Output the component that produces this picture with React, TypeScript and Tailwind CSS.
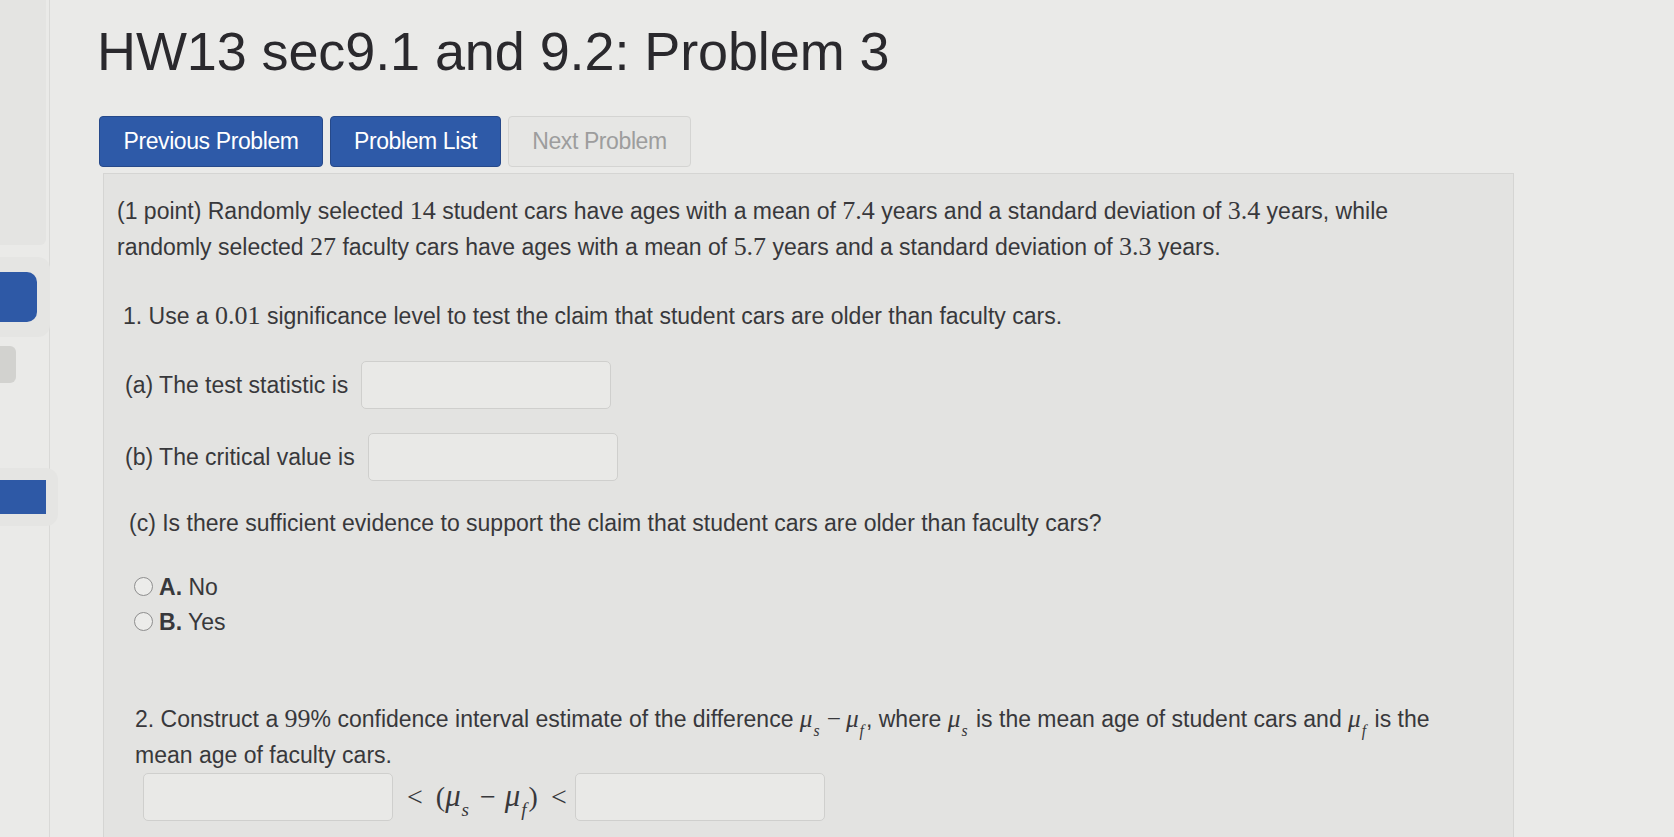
import React from 'react';

const Num = ({ children }: { children: React.ReactNode }) => (
  <span className="font-['Liberation_Serif',serif] text-[1.13em] leading-none">{children}</span>
);

const Mu = ({ sub }: { sub: string }) => (
  <span className="font-['Liberation_Serif',serif] italic text-[1.1em] leading-none">
    μ<sub className="ml-[1px] mr-[2px] text-[0.62em] align-[-0.3em]">{sub}</sub>
  </span>
);

const AnswerBox = ({ className = '' }: { className?: string }) => (
  <input
    type="text"
    className={`h-[48px] w-[250px] rounded-[5px] border border-[#cfcfcd] bg-[#e9e9e7] outline-none ${className}`}
  />
);

const Radio = ({ letter, label }: { letter: string; label: string }) => (
  <label className="flex h-[35px] items-center gap-[6px]">
    <span className="h-[19px] w-[19px] rounded-full border-[1.5px] border-[#8e8e8e] bg-[#ececea]" />
    <span>
      <b className="font-semibold">{letter}.</b> {label}
    </span>
  </label>
);

const Sidebar = () => (
  <aside className="flex w-[50px] shrink-0 flex-col border-r border-[#d9d9d7]">
    <div className="h-[245px] w-[46px] rounded-br-md bg-[#e4e4e2]" />
    <div className="mt-[12px] w-[50px] rounded-r-xl bg-[#e5e5e3] py-[15px]">
      <div className="h-[50px] w-[37px] rounded-r-[10px] bg-[#2e59a6]" />
    </div>
    <div className="mt-[9px] h-[37px] w-[16px] rounded-r-md bg-[#d2d2cf]" />
    <div className="mt-[85px] w-[58px] rounded-r-xl bg-[#e5e5e3] py-[12px]">
      <div className="h-[34px] w-[46px] bg-[#2e59a6]" />
    </div>
  </aside>
);

export default function App() {
  return (
    <div className="flex min-h-screen bg-[#eaeae8] font-['Liberation_Sans',Arial,sans-serif] text-[#38383b]">
      <Sidebar />
      <main className="flex-1 pl-[47px]">
        <h1 className="mt-[24px] text-[54px] leading-none tracking-[-0.1px] text-[#2a292d]">
          HW13 sec9.1 and 9.2: Problem 3
        </h1>

        <div className="mt-[38px] flex gap-[7px] pl-[2px]">
          <button className="h-[51px] w-[224px] rounded-[4px] border border-[#26498a] bg-[#2e5aa8] text-[23px] tracking-[-0.4px] text-white">
            Previous Problem
          </button>
          <button className="h-[51px] w-[171px] rounded-[4px] border border-[#26498a] bg-[#2e5aa8] text-[23px] tracking-[-0.4px] text-white">
            Problem List
          </button>
          <button className="h-[51px] w-[183px] rounded-[4px] border border-[#d4d4d2] bg-[#e6e6e4] text-[23px] tracking-[-0.4px] text-[#9d9d9d]">
            Next Problem
          </button>
        </div>

        <section className="mt-[6px] mr-[160px] ml-[6px] min-h-[670px] border border-[#d5d5d3] bg-[#e3e3e1] px-[13px] pt-[19px] text-[23px] leading-[36px]">
          <p>
            (1 point) Randomly selected <Num>14</Num> student cars have ages with a mean of <Num>7.4</Num> years and a
            standard deviation of <Num>3.4</Num> years, while
            <br />
            randomly selected <Num>27</Num> faculty cars have ages with a mean of <Num>5.7</Num> years and a standard
            deviation of <Num>3.3</Num> years.
          </p>

          <div className="pl-[6px]">
            <p className="mt-[33px]">
              1. Use a <Num>0.01</Num> significance level to test the claim that student cars are older than faculty
              cars.
            </p>

            <div className="mt-[27px] flex items-center gap-[13px] pl-[2px]">
              <span>(a) The test statistic is</span>
              <AnswerBox />
            </div>

            <div className="mt-[24px] flex items-center gap-[13px] pl-[2px]">
              <span>(b) The critical value is</span>
              <AnswerBox />
            </div>

            <p className="mt-[24px] pl-[6px]">
              (c) Is there sufficient evidence to support the claim that student cars are older than faculty cars?
            </p>

            <div className="mt-[28px] pl-[11px]">
              <Radio letter="A" label="No" />
              <Radio letter="B" label="Yes" />
            </div>

            <p className="mt-[61px] pl-[12px]">
              2. Construct a <Num>99</Num>% confidence interval estimate of the difference <Mu sub="s" />
              <span className="mx-[5px] font-['Liberation_Serif',serif] text-[1.1em]">−</span>
              <Mu sub="f" />, where <Mu sub="s" /> is the mean age of student cars and <Mu sub="f" /> is the
              <br />
              mean age of faculty cars.
            </p>

            <div className="flex items-center pl-[20px]">
              <AnswerBox className="h-[47px] w-[247px]" />
              <span className="ml-[14px] mr-[8px] flex items-center gap-[13px] font-['Liberation_Serif',serif] text-[28px]">
                <span>&lt;</span>
                <span>
                  (<Mu sub="s" />
                  <span className="mx-[9px]">−</span>
                  <Mu sub="f" />)
                </span>
                <span>&lt;</span>
              </span>
              <AnswerBox className="h-[47px] w-[243px]" />
            </div>
          </div>
        </section>
      </main>
    </div>
  );
}
